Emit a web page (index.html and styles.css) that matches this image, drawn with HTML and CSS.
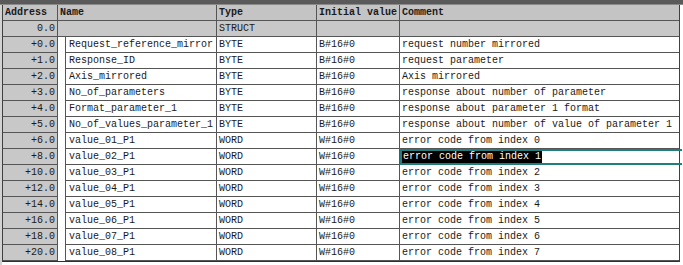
FILE: index.html
```html
<!DOCTYPE html>
<html>
<head>
<meta charset="utf-8">
<link rel="stylesheet" href="styles.css">
</head>
<body>
<div class="topbar"></div>
<div class="frame">
  <div class="table">
    <div class="row head">
      <div class="c addr">Address</div>
      <div class="c name">Name</div>
      <div class="c type">Type</div>
      <div class="c init">Initial value</div>
      <div class="c cmt">Comment</div>
    </div>
    <div class="row struct">
      <div class="c addr">0.0</div>
      <div class="c name"></div>
      <div class="c type">STRUCT</div>
      <div class="c init"></div>
      <div class="c cmt"></div>
    </div>
    <div class="row">
      <div class="c addr">+0.0</div>
      <div class="c name"><span class="indent"></span><span class="nm">Request_reference_mirror</span></div>
      <div class="c type">BYTE</div>
      <div class="c init">B#16#0</div>
      <div class="c cmt">request number mirrored</div>
    </div>
    <div class="row">
      <div class="c addr">+1.0</div>
      <div class="c name"><span class="indent"></span><span class="nm">Response_ID</span></div>
      <div class="c type">BYTE</div>
      <div class="c init">B#16#0</div>
      <div class="c cmt">request parameter</div>
    </div>
    <div class="row">
      <div class="c addr">+2.0</div>
      <div class="c name"><span class="indent"></span><span class="nm">Axis_mirrored</span></div>
      <div class="c type">BYTE</div>
      <div class="c init">B#16#0</div>
      <div class="c cmt">Axis mirrored</div>
    </div>
    <div class="row">
      <div class="c addr">+3.0</div>
      <div class="c name"><span class="indent"></span><span class="nm">No_of_parameters</span></div>
      <div class="c type">BYTE</div>
      <div class="c init">B#16#0</div>
      <div class="c cmt">response about number of parameter</div>
    </div>
    <div class="row">
      <div class="c addr">+4.0</div>
      <div class="c name"><span class="indent"></span><span class="nm">Format_parameter_1</span></div>
      <div class="c type">BYTE</div>
      <div class="c init">B#16#0</div>
      <div class="c cmt">response about parameter 1 format</div>
    </div>
    <div class="row">
      <div class="c addr">+5.0</div>
      <div class="c name"><span class="indent"></span><span class="nm">No_of_values_parameter_1</span></div>
      <div class="c type">BYTE</div>
      <div class="c init">B#16#0</div>
      <div class="c cmt">response about number of value of parameter 1</div>
    </div>
    <div class="row">
      <div class="c addr">+6.0</div>
      <div class="c name"><span class="indent"></span><span class="nm">value_01_P1</span></div>
      <div class="c type">WORD</div>
      <div class="c init">W#16#0</div>
      <div class="c cmt">error code from index 0</div>
    </div>
    <div class="row">
      <div class="c addr">+8.0</div>
      <div class="c name"><span class="indent"></span><span class="nm">value_02_P1</span></div>
      <div class="c type">WORD</div>
      <div class="c init">W#16#0</div>
      <div class="c cmt selected"><span class="hl">error code from index 1</span></div>
    </div>
    <div class="row">
      <div class="c addr">+10.0</div>
      <div class="c name"><span class="indent"></span><span class="nm">value_03_P1</span></div>
      <div class="c type">WORD</div>
      <div class="c init">W#16#0</div>
      <div class="c cmt">error code from index 2</div>
    </div>
    <div class="row">
      <div class="c addr">+12.0</div>
      <div class="c name"><span class="indent"></span><span class="nm">value_04_P1</span></div>
      <div class="c type">WORD</div>
      <div class="c init">W#16#0</div>
      <div class="c cmt">error code from index 3</div>
    </div>
    <div class="row">
      <div class="c addr">+14.0</div>
      <div class="c name"><span class="indent"></span><span class="nm">value_05_P1</span></div>
      <div class="c type">WORD</div>
      <div class="c init">W#16#0</div>
      <div class="c cmt">error code from index 4</div>
    </div>
    <div class="row">
      <div class="c addr">+16.0</div>
      <div class="c name"><span class="indent"></span><span class="nm">value_06_P1</span></div>
      <div class="c type">WORD</div>
      <div class="c init">W#16#0</div>
      <div class="c cmt">error code from index 5</div>
    </div>
    <div class="row">
      <div class="c addr">+18.0</div>
      <div class="c name"><span class="indent"></span><span class="nm">value_07_P1</span></div>
      <div class="c type">WORD</div>
      <div class="c init">W#16#0</div>
      <div class="c cmt">error code from index 6</div>
    </div>
    <div class="row">
      <div class="c addr">+20.0</div>
      <div class="c name"><span class="indent"></span><span class="nm">value_08_P1</span></div>
      <div class="c type">WORD</div>
      <div class="c init">W#16#0</div>
      <div class="c cmt">error code from index 7</div>
    </div>
  </div>
</div>
</body>
</html>
```
FILE: styles.css
```css
html, body {
  margin: 0;
  padding: 0;
  background: #ffffff;
  overflow: hidden;
}
body {
  width: 683px;
  height: 265px;
  font-family: "Liberation Mono", "Courier New", monospace;
  font-size: 10px;
  color: #1a1a1a;
  background: linear-gradient(to right, #d2d2d2 0, #d2d2d2 2px, #ffffff 2px);
}
.topbar {
  height: 4px;
  background: #5a5a5a;
  border-bottom: 1px solid #8a8a8a;
}
.frame {
  margin-left: 2px;
  width: 676px;
  border-left: 1px solid #404040;
  border-right: 1px solid #404040;
  background: #ffffff;
}
.table {
  border-bottom: 1px solid #303030;
}
.row {
  display: grid;
  grid-template-columns: 55px 159px 100px 83px 279px;
  height: 16px;
}
.c {
  box-sizing: border-box;
  height: 16px;
  line-height: 15px;
  padding: 0 3px;
  border-right: 1px solid #555555;
  border-bottom: 1px solid #555555;
  white-space: nowrap;
  overflow: hidden;
}
.c.cmt {
  border-right: none;
}
.addr {
  background: #c8c8c8;
  text-align: right;
  padding-right: 2px;
}
.head .c {
  background: #c4c4c4;
  font-weight: bold;
  padding-left: 2px;
}
.head .addr {
  text-align: left;
}
.struct .c {
  background: #c8c8c8;
}
.row:not(.head):not(.struct) .name {
  display: flex;
  padding: 0;
  border-bottom: none;
}
.indent {
  width: 7px;
  flex: none;
  background: #ffffff;
}
.nm {
  flex: 1;
  box-sizing: border-box;
  height: 16px;
  line-height: 15px;
  padding-left: 3px;
  border-left: 1px solid #555555;
  border-bottom: 1px solid #555555;
}
.type, .init {
  padding-left: 2px;
}
.cmt {
  padding-left: 2px;
}
.selected {
  border: 2px solid #1f7f7f;
  line-height: 12px;
  padding-left: 0;
  margin-right: -3px;
}
.hl {
  display: inline-block;
  background: #000000;
  color: #ffffff;
  padding: 0 1px 0 1px;
  line-height: 12px;
}
```
